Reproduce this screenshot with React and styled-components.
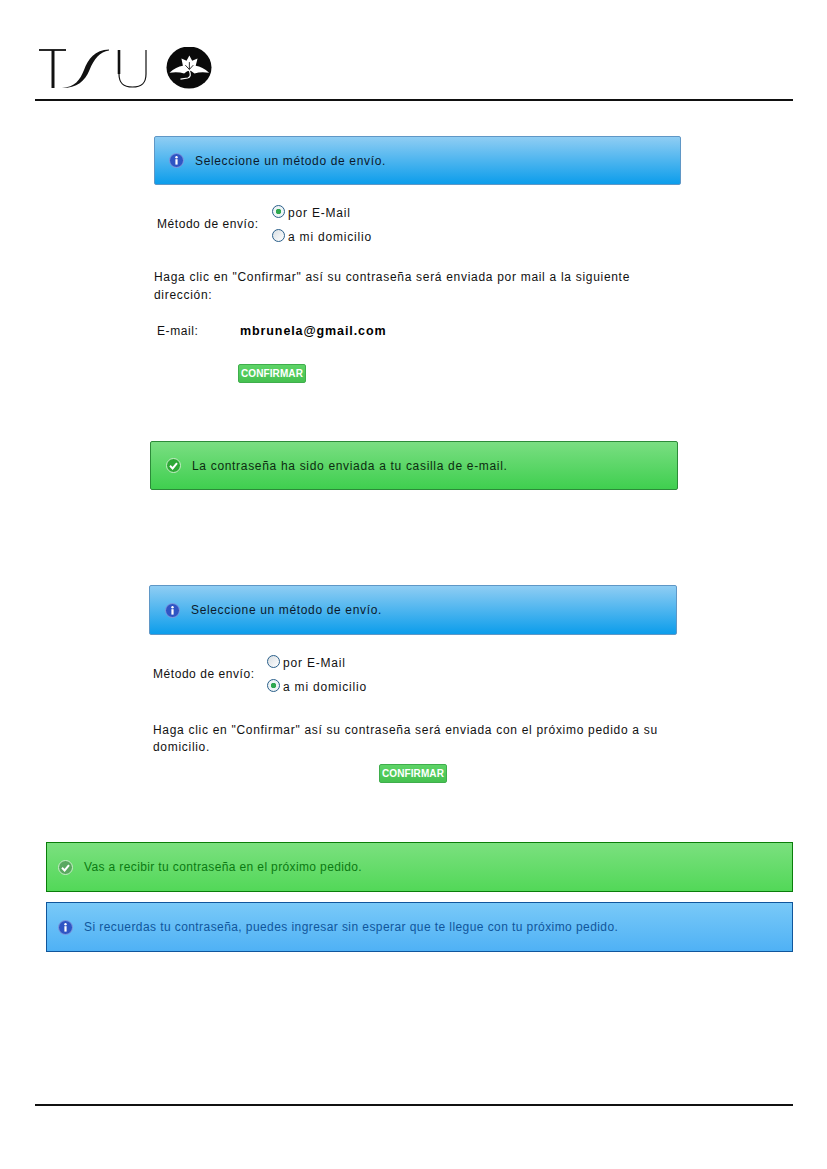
import styled, { createGlobalStyle, css } from 'styled-components'

const GlobalStyle = createGlobalStyle`
  html, body {
    margin: 0;
    padding: 0;
    background: #fff;
  }
  body {
    font-family: "Liberation Sans", Arial, sans-serif;
    font-size: 12px;
    color: #111;
  }
`

const bannerStyles = {
  info: css`
    background: linear-gradient(#8fcdf3, #0c9deb);
    border: 1px solid #5f97c6;
    border-radius: 2px;
    color: #0b1a2c;
    letter-spacing: 0.65px;
  `,
  success: css`
    background: linear-gradient(#7ade82, #3fcf4f);
    border: 1px solid #2c8a39;
    border-radius: 2px;
    color: #0c2c10;
    letter-spacing: 0.68px;
  `,
  successWide: css`
    background: linear-gradient(#7be07f, #52d858);
    border: 1px solid #0a7d0a;
    color: #0b7a12;
    letter-spacing: 0.37px;
  `,
  infoWide: css`
    background: linear-gradient(#79c9f8, #4fb1f5);
    border: 1px solid #10569c;
    color: #10569c;
    letter-spacing: 0.42px;
  `,
}

function App() {
  return (
    <Page>
      <GlobalStyle />
      <Header>
        <Logo />
      </Header>

      <Section $left={154} $top={35}>
        <Banner $kind="info" $width={527} $pad={14}>
          <InfoIcon />
          Seleccione un método de envío.
        </Banner>
        <MethodRow $left={3} $top={21}>
          <MethodLabel $width={115}>Método de envío:</MethodLabel>
          <Options>
            <Option><Radio $checked />por E-Mail</Option>
            <Option><Radio />a mi domicilio</Option>
          </Options>
        </MethodRow>
        <Note $top={24} $lines={18}>
          Haga clic en "Confirmar" así su contraseña será enviada por mail a la siguiente
          dirección:
        </Note>
        <EmailRow>
          <EmailLabel>E-mail:</EmailLabel>
          <EmailValue>mbrunela@gmail.com</EmailValue>
        </EmailRow>
        <ConfirmButton $left={84} $top={24}>CONFIRMAR</ConfirmButton>
      </Section>

      <Section $left={150} $top={58}>
        <Banner $kind="success" $width={528} $pad={15}>
          <CheckIcon />
          La contraseña ha sido enviada a tu casilla de e-mail.
        </Banner>
      </Section>

      <Section $left={149} $top={95}>
        <Banner $kind="info" $width={528} $tall $pad={15}>
          <InfoIcon />
          Seleccione un método de envío.
        </Banner>
        <MethodRow $left={4} $top={21}>
          <MethodLabel $width={114}>Método de envío:</MethodLabel>
          <Options>
            <Option><Radio />por E-Mail</Option>
            <Option><Radio $checked />a mi domicilio</Option>
          </Options>
        </MethodRow>
        <Note $top={28} $left={4} $lines={17}>
          Haga clic en "Confirmar" así su contraseña será enviada con el próximo pedido a su
          domicilio.
        </Note>
        <ConfirmButton $left={230} $top={8}>CONFIRMAR</ConfirmButton>
      </Section>

      <WideStack>
        <Banner $kind="successWide" $tall $pad={11}>
          <CheckIcon $muted />
          Vas a recibir tu contraseña en el próximo pedido.
        </Banner>
        <Banner $kind="infoWide" $tall $pad={11}>
          <InfoIcon />
          Si recuerdas tu contraseña, puedes ingresar sin esperar que te llegue con tu próximo pedido.
        </Banner>
      </WideStack>

      <Footer />
    </Page>
  )
}

function Logo() {
  return (
    <svg width="176" height="42" viewBox="0 0 176 42" fill="none">
      <g stroke="#111">
        <path d="M1 3 H28" strokeWidth="1.8" />
        <path d="M15 3 V41" strokeWidth="3" />
        <path d="M81 3 V27 C81 36 85 40 94.5 40 C104 40 108 36 108 27 V3" strokeWidth="1.2" />
        <path d="M81 3 V27" strokeWidth="2.6" />
      </g>
      <path
        d="M24 41 C37 40 42 33 46 23 C50 12 57 3 71 2.5 L71 3.6 C62 5 56 12 51.5 23 C47 34 39 41 24 41 Z"
        fill="#111"
      />
      <ellipse cx="151" cy="20.5" rx="22.5" ry="21" fill="#0a0a0a" />
      <g transform="translate(151 20) scale(1.22) translate(-151 -20)">
        <path
          d="M151.3 10.5 L153.6 14.8 L158 13 L156.5 19 C160 19.5 164 21.5 167.5 24.8 C163 24 159 24.2 155.5 25.4 L153 23.5 L152 23 L149.5 23.5 L147 25.4 C143.5 24.2 139.5 24 135 24.8 C138.5 21.5 142.5 19.5 146 19 L144.8 13 L149 14.8 Z"
          fill="#fff"
        />
        <path d="M151.3 16 V22 M148 18.5 L151.3 22 L154.5 18.5" stroke="#0a0a0a" strokeWidth="0.7" />
        <path d="M151.3 23 C152.6 26 152.4 28.4 150 29 L144 30" stroke="#fff" strokeWidth="1" />
      </g>
    </svg>
  )
}

function InfoIcon() {
  return (
    <IconWrap>
      <svg width="15" height="15" viewBox="0 0 15 15">
        <circle cx="7.5" cy="7.5" r="7" fill="#2f55c4" stroke="#7f9be0" strokeWidth="1" />
        <circle cx="7.5" cy="4.2" r="1.2" fill="#fff" />
        <rect x="6.4" y="6.2" width="2.2" height="5.4" fill="#fff" />
      </svg>
    </IconWrap>
  )
}

function CheckIcon({ $muted }) {
  return (
    <IconWrap>
      <svg width="15" height="15" viewBox="0 0 15 15">
        <circle cx="7.5" cy="7.5" r="7" fill={$muted ? '#5aa860' : '#2ea836'} stroke="#c8eec8" strokeWidth="1" />
        <path d="M4 7.8 L6.6 10.4 L11 5.2" fill="none" stroke="#fff" strokeWidth="2" />
      </svg>
    </IconWrap>
  )
}

const Page = styled.main`
  width: 827px;
  height: 1169px;
  padding-top: 47px;
  box-sizing: border-box;
  display: flex;
  flex-direction: column;
  overflow: hidden;
`

const Header = styled.header`
  height: 52px;
  margin: 0 34px 0 35px;
  padding-left: 3px;
  border-bottom: 2px solid #111;
`

const Section = styled.section`
  margin-left: ${props => props.$left}px;
  margin-top: ${props => props.$top}px;
`

const Banner = styled.div`
  ${props => bannerStyles[props.$kind]}
  box-sizing: border-box;
  width: ${props => (props.$width ? `${props.$width}px` : 'auto')};
  height: ${props => (props.$tall ? '50px' : '49px')};
  display: flex;
  align-items: center;
  padding-left: ${props => props.$pad}px;
`

const IconWrap = styled.span`
  display: flex;
  margin-right: 11px;
`

const MethodRow = styled.div`
  display: flex;
  align-items: center;
  margin-left: ${props => props.$left}px;
  margin-top: ${props => props.$top}px;
`

const MethodLabel = styled.div`
  width: ${props => props.$width}px;
  padding-bottom: 3px;
  letter-spacing: 0.55px;
`

const Options = styled.div`
  display: flex;
  flex-direction: column;
  gap: 10px;
`

const Option = styled.label`
  display: flex;
  align-items: center;
  height: 14px;
  letter-spacing: 0.8px;
`

const Radio = styled.span`
  box-sizing: border-box;
  width: 13px;
  height: 13px;
  margin: -3px 3px 0 0;
  border-radius: 50%;
  border: 1px solid #2a5f8a;
  background: ${props =>
    props.$checked
      ? 'radial-gradient(circle, #2fa84f 0 2.5px, #eef4f6 3px)'
      : 'linear-gradient(135deg, #d8dee2, #fff)'};
`

const Note = styled.p`
  width: 510px;
  margin: ${props => props.$top}px 0 0 ${props => props.$left || 0}px;
  line-height: ${props => props.$lines}px;
  letter-spacing: 0.7px;
`

const EmailRow = styled.div`
  display: flex;
  margin: 18px 0 0 3px;
  line-height: 18px;
`

const EmailLabel = styled.div`
  width: 83px;
  letter-spacing: 0.6px;
`

const EmailValue = styled.div`
  font-weight: bold;
  font-size: 12.5px;
  letter-spacing: 0.9px;
  color: #000;
`

const ConfirmButton = styled.button`
  display: block;
  box-sizing: border-box;
  width: 68px;
  height: 19px;
  margin: ${props => props.$top}px 0 0 ${props => props.$left}px;
  padding: 0;
  border: 1px solid #3fae4c;
  border-radius: 2px;
  background: linear-gradient(#5ed467, #45c150);
  color: #fff;
  font-family: inherit;
  font-size: 10px;
  font-weight: bold;
  letter-spacing: 0.1px;
`

const WideStack = styled.div`
  display: flex;
  flex-direction: column;
  gap: 10px;
  margin: 59px 34px 0 46px;
`

const Footer = styled.footer`
  margin: auto 34px 63px 35px;
  border-top: 2px solid #111;
`

export default App
